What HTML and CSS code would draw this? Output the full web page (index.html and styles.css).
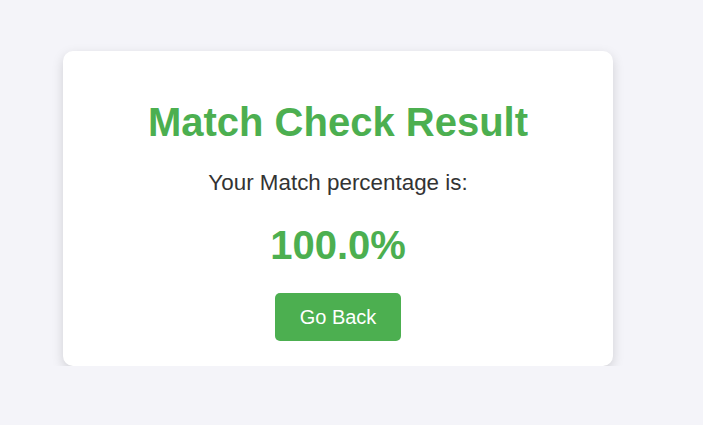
FILE: index.html
```html
<!DOCTYPE html>
<html lang="en">
<head>
<meta charset="utf-8">
<title>Match Check Result</title>
<link rel="stylesheet" href="styles.css">
</head>
<body>
<main class="page">
  <section class="card">
    <h1 class="title">Match Check Result</h1>
    <p class="label">Your Match percentage is:</p>
    <p class="percent">100.0%</p>
    <a class="button" href="#">Go Back</a>
  </section>
</main>
</body>
</html>
```
FILE: styles.css
```css
html, body {
  margin: 0;
  padding: 0;
}
body {
  background: #f4f4f9;
  font-family: "Liberation Sans", Arial, sans-serif;
  color: #333;
}
.page {
  padding: 51px 0 0 63px;
}
.card {
  width: 550px;
  box-sizing: border-box;
  background: #fff;
  border-radius: 10px;
  box-shadow: 0 4px 12px rgba(0, 0, 0, 0.15);
  padding: 48px 20px 25px;
  display: flex;
  flex-direction: column;
  align-items: center;
}
.title {
  margin: 0;
  font-size: 40px;
  line-height: 46px;
  font-weight: bold;
  color: #4caf50;
}
.label {
  margin: 25px 0 0;
  font-size: 22.4px;
  line-height: 26px;
  color: #333;
}
.percent {
  margin: 26px 0 0;
  font-size: 40px;
  line-height: 46px;
  font-weight: bold;
  color: #4caf50;
}
.button {
  margin-top: 25px;
  display: inline-block;
  background: #4caf50;
  color: #fff;
  text-decoration: none;
  font-size: 20px;
  line-height: 48px;
  height: 48px;
  padding: 0 25px;
  border-radius: 5px;
}
```
